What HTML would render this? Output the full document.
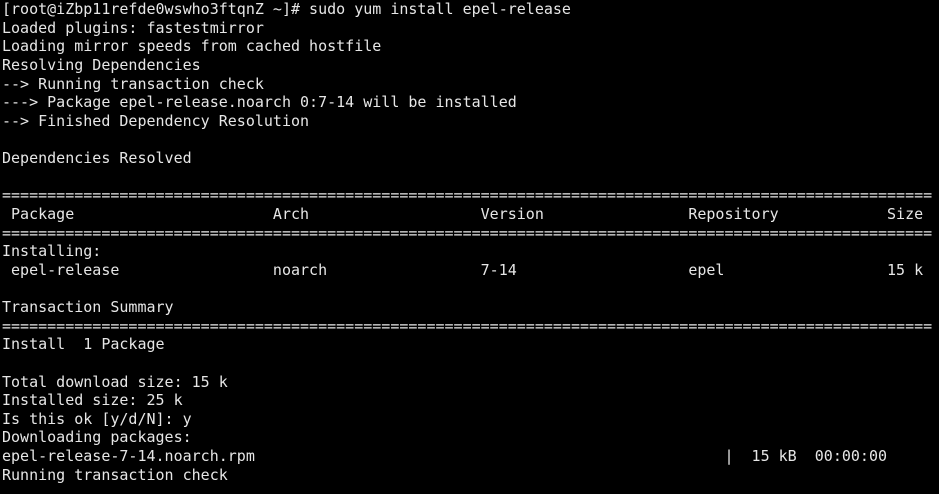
<!DOCTYPE html>
<html><head><style>
html,body{margin:0;padding:0;background:#000;width:939px;height:494px;overflow:hidden}
pre{margin:0;padding:0 0 0 2px;font-family:"DejaVu Sans Mono","Liberation Mono",monospace;font-size:15px;line-height:18.62px;color:#e6e6e6;white-space:pre}
</style></head><body><pre>[root@iZbp11refde0wswho3ftqnZ ~]# sudo yum install epel-release
Loaded plugins: fastestmirror
Loading mirror speeds from cached hostfile
Resolving Dependencies
--&gt; Running transaction check
---&gt; Package epel-release.noarch 0:7-14 will be installed
--&gt; Finished Dependency Resolution

Dependencies Resolved

=======================================================================================================
 Package                      Arch                   Version                Repository            Size
=======================================================================================================
Installing:
 epel-release                 noarch                 7-14                   epel                  15 k

Transaction Summary
=======================================================================================================
Install  1 Package

Total download size: 15 k
Installed size: 25 k
Is this ok [y/d/N]: y
Downloading packages:
epel-release-7-14.noarch.rpm                                                    |  15 kB  00:00:00
Running transaction check</pre></body></html>
